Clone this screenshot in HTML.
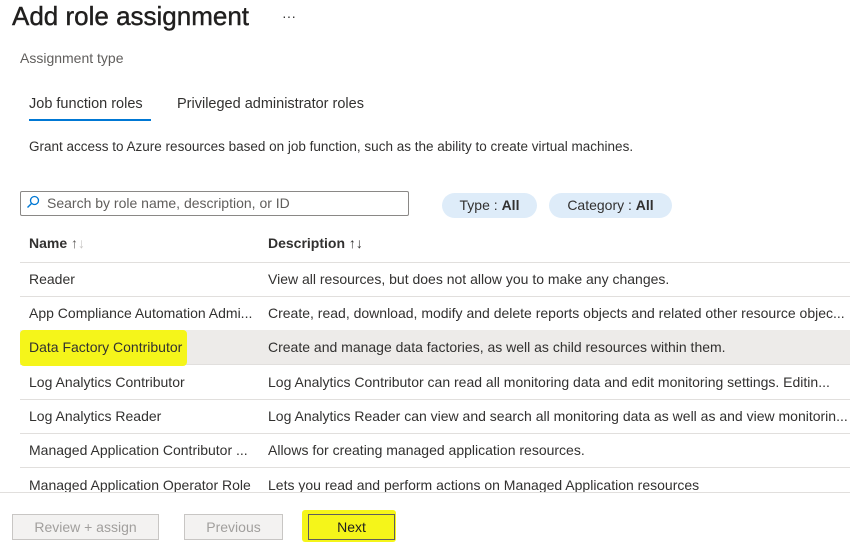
<!DOCTYPE html><html><head><style>
body{margin:0;width:850px;height:543px;background:#fff;font-family:"Liberation Sans",sans-serif;color:#323130;position:relative;overflow:hidden}
.a{position:absolute;white-space:nowrap}
.row{position:absolute;left:20px;width:830px;height:34px;border-bottom:1px solid #e1dfdd;font-size:14px}
.row span{position:absolute;top:9px}
.row .n{left:9px}.row .d{left:248px}
.pill{position:absolute;top:193px;height:25px;border-radius:13px;background:#deecf9;font-size:14px;line-height:25px;text-align:center}
.btn{position:absolute;top:514px;height:24px;border:1px solid #c8c6c4;background:#f3f2f1;color:#a19f9d;font-size:14px;line-height:24px;text-align:center}
</style></head><body>
<div class="a" style="left:12px;top:1px;font-size:26px;color:#201f1e;-webkit-text-stroke:0.4px #201f1e">Add role assignment</div>
<div class="a" style="left:282px;top:8px;font-size:14px">···</div>
<div class="a" style="left:20px;top:49px;height:19px;overflow:hidden;font-size:14px;color:#605e5c"><span style="position:relative;top:1px">Assignment type</span></div>
<div class="a" style="left:29px;top:96px;font-size:14.5px">Job function roles</div>
<div class="a" style="left:29px;top:119px;width:122px;height:2px;background:#0078d4"></div>
<div class="a" style="left:177px;top:96px;font-size:14.5px">Privileged administrator roles</div>
<div class="a" style="left:29px;top:139px;font-size:13.5px">Grant access to Azure resources based on job function, such as the ability to create virtual machines.</div>
<div class="a" style="left:20px;top:191px;width:387px;height:23px;border:1px solid #8a8886;border-radius:2px"></div>
<svg class="a" style="left:26px;top:195px" width="14" height="14" viewBox="0 0 14 14"><circle cx="8.5" cy="5.5" r="4" fill="none" stroke="#0078d4" stroke-width="1.3"/><path d="M5.5 8.5L1.5 12.5" stroke="#0078d4" stroke-width="1.4"/></svg>
<div class="a" style="left:47px;top:195px;font-size:14px;color:#605e5c">Search by role name, description, or ID</div>
<div class="pill" style="left:442px;width:95px">Type : <b>All</b></div>
<div class="pill" style="left:549px;width:123px">Category : <b>All</b></div>
<div class="row" style="top:228px"><span class="n" style="font-weight:bold;top:7px">Name <span style="position:static;font-weight:normal;color:#605e5c">↑<span style="position:static;color:#c8c6c4">↓</span></span></span><span class="d" style="font-weight:bold;top:7px">Description <span style="position:static;font-weight:normal">↑↓</span></span></div>
<div class="row" style="top:262px"><span class="n">Reader</span><span class="d">View all resources, but does not allow you to make any changes.</span></div>
<div class="row" style="top:296px"><span class="n">App Compliance Automation Admi...</span><span class="d">Create, read, download, modify and delete reports objects and related other resource objec...</span></div>
<div class="row" style="top:330px;background:#edebe9"><span class="n" style="left:0;top:0;height:36px;width:167px;background:#f5f51a;border-radius:4px"></span><span class="n">Data Factory Contributor</span><span class="d">Create and manage data factories, as well as child resources within them.</span></div>
<div class="row" style="top:365px"><span class="n">Log Analytics Contributor</span><span class="d">Log Analytics Contributor can read all monitoring data and edit monitoring settings. Editin...</span></div>
<div class="row" style="top:399px"><span class="n">Log Analytics Reader</span><span class="d">Log Analytics Reader can view and search all monitoring data as well as and view monitorin...</span></div>
<div class="row" style="top:433px"><span class="n">Managed Application Contributor ...</span><span class="d">Allows for creating managed application resources.</span></div>
<div class="a" style="left:0;top:467px;width:850px;height:25px;overflow:hidden;font-size:14px"><span class="a" style="left:29px;top:10px">Managed Application Operator Role</span><span class="a" style="left:268px;top:10px">Lets you read and perform actions on Managed Application resources</span></div>
<div class="a" style="left:0;top:492px;width:850px;height:1px;background:#e1dfdd"></div>
<div class="btn" style="left:12px;width:145px">Review + assign</div>
<div class="btn" style="left:184px;width:97px">Previous</div>
<div class="a" style="left:302px;top:510px;width:94px;height:32px;background:#f5f51a;border-radius:3px"></div>
<div class="btn" style="left:308px;width:85px;background:#f5f51a;border-color:#605e5c;color:#201f1e">Next</div>
</body></html>
